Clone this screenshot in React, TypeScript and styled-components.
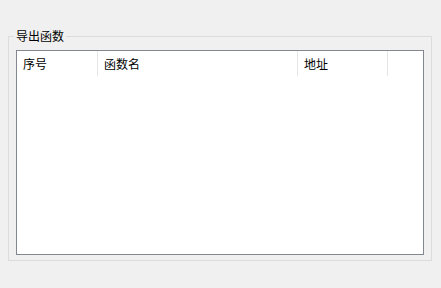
import React from "react";
import styled, { createGlobalStyle } from "styled-components";

const Global = createGlobalStyle`
  html, body { margin: 0; padding: 0; background: #f0f0f0; }
  body { font-family: "Noto Sans CJK SC", "Microsoft YaHei", sans-serif; font-size: 12px; color: #000; }
`;

const Page = styled.div`
  padding: 29px 9px 0 8px;
`;

const Group = styled.fieldset`
  margin: 0;
  padding: 7px 7px 5px 7px;
  border: 1px solid #dcdcdc;
  min-width: 0;
`;

const Legend = styled.legend`
  margin-left: -2px;
  padding: 0 2px;
  font-size: 12px;
  line-height: 14px;
`;

const ListView = styled.div`
  height: 205px;
  box-sizing: border-box;
  border: 1px solid #828790;
  background: #fff;
`;

const Header = styled.div`
  display: flex;
  height: 25px;
`;

const HeaderCell = styled.div<{ $w: number }>`
  width: ${(p) => p.$w}px;
  box-sizing: border-box;
  border-right: 1px solid #e5e5e5;
  padding-left: 6px;
  display: flex;
  align-items: center;
  font-size: 12px;
  white-space: nowrap;
`;

const columns = [
  { name: "序号", w: 81 },
  { name: "函数名", w: 200 },
  { name: "地址", w: 90 },
];

export default function App() {
  return (
    <>
      <Global />
      <Page>
        <Group>
          <Legend>导出函数</Legend>
          <ListView>
            <Header>
              {columns.map((c) => (
                <HeaderCell key={c.name} $w={c.w}>
                  {c.name}
                </HeaderCell>
              ))}
            </Header>
          </ListView>
        </Group>
      </Page>
    </>
  );
}
